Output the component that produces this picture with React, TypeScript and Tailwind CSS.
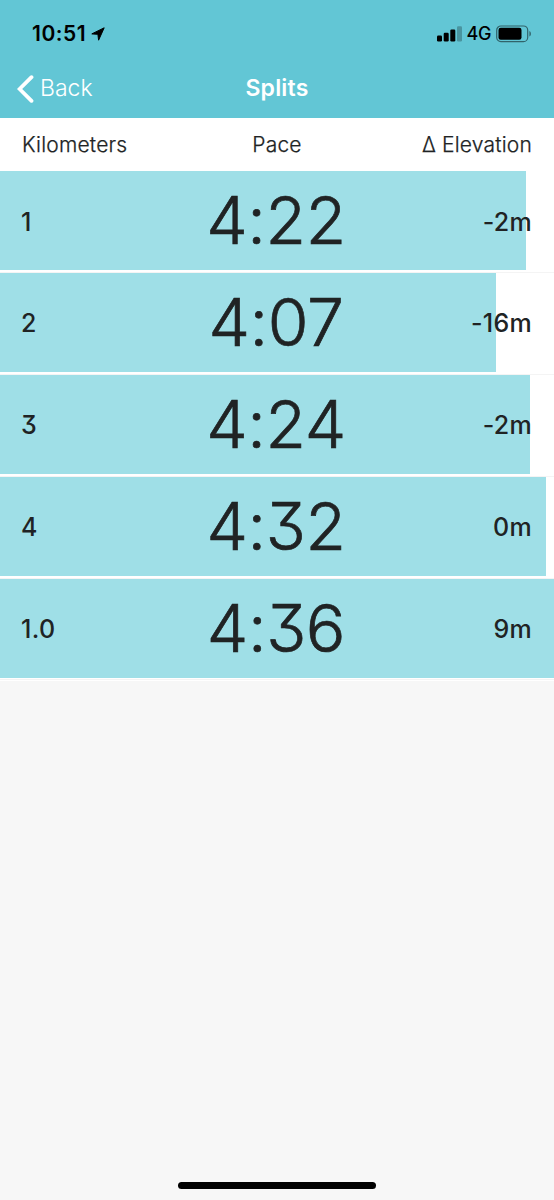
import React from 'react'

type Split = {
    label: string;
    pace: string;
    seconds: number;
    elevation: string;
}

const splits: Split[] = [
    { label: '1', pace: '4:22', seconds: 262, elevation: '-2m' },
    { label: '2', pace: '4:07', seconds: 247, elevation: '-16m' },
    { label: '3', pace: '4:24', seconds: 264, elevation: '-2m' },
    { label: '4', pace: '4:32', seconds: 272, elevation: '0m' },
    { label: '1.0', pace: '4:36', seconds: 276, elevation: '9m' },
];

const slowest = Math.max(...splits.map((s) => s.seconds));

const StatusBar = () => (
    <div className="flex h-[66px] items-center justify-between pl-8 pr-[23px] pt-px text-black">
        <div className="flex items-center gap-[5px]">
            <span className="text-[21px] font-semibold tracking-[0.5px]">10:51</span>
            <svg width="14" height="14" viewBox="0 0 14 14" fill="currentColor">
                <path stroke="currentColor" strokeWidth="1" strokeLinejoin="round" d="M13.2 0.8 7.6 13.2 6.9 7.3.8 6.9Z" />
            </svg>
        </div>
        <div className="flex items-center">
            <svg width="25" height="16" viewBox="0 0 25 16" fill="currentColor">
                <rect x="0" y="9.5" width="5" height="6" rx="1.2" />
                <rect x="6.7" y="6.8" width="5" height="8.7" rx="1.2" />
                <rect x="13.3" y="3.5" width="5" height="12" rx="1.2" />
                <rect x="20" y="0.3" width="5" height="15.2" rx="1.2" opacity="0.25" />
            </svg>
            <span className="ml-[5px] text-[18px] font-medium tracking-[-0.4px]">4G</span>
            <svg className="ml-[5px]" width="35" height="18" viewBox="0 0 35 18">
                <rect x="0.7" y="1" width="31" height="15.6" rx="4.2" fill="none" stroke="#000" strokeWidth="1.2" opacity="0.5" />
                <rect x="2.5" y="2.8" width="23" height="12" rx="2.2" />
                <path d="M33.4 6v5.6c2-.8 2-4.8 0-5.6Z" opacity="0.5" />
            </svg>
        </div>
    </div>
);

const SplitRow = ({ split }: { split: Split }) => (
    <div className="relative h-[101.8px] border-b border-[#f4f4f4] bg-white">
        <div
            className="h-[99px] bg-[#9fdfe7]"
            style={{ width: `${(split.seconds / slowest) * 100}%` }}
        />
        <div className="absolute inset-x-0 top-0 grid h-[102px] grid-cols-3 items-center px-[22px] text-[25px] font-medium">
            <span className="-ml-px tracking-[0.3px]">{split.label}</span>
            <span className="whitespace-nowrap pb-[4px] pr-[2px] text-center text-[66px] font-light leading-none tracking-[-0.4px] [-webkit-text-stroke:0.7px_#202324]">{split.pace}</span>
            <span className="text-right tracking-[0.3px]">{split.elevation}</span>
        </div>
    </div>
);

const App = () => {
    return (
        <div className="flex h-[1200px] w-[554px] flex-col overflow-hidden bg-[#f7f7f7] font-['Inter',sans-serif] text-[#202324] [font-feature-settings:'cv09','calt'_0]">
            <header className="h-[118px] shrink-0 bg-[#62c6d5]">
                <StatusBar />
                <div className="grid h-[45px] grid-cols-3 items-center px-[17px] text-white">
                    <button className="flex items-center gap-[6px] text-[23px] font-light">
                        <svg width="17" height="28" viewBox="0 0 17 28" fill="none" stroke="currentColor" strokeWidth="3.8" strokeLinecap="round" strokeLinejoin="miter">
                            <path d="M14.5 2.2 2.6 14l11.9 11.8" />
                        </svg>
                        Back
                    </button>
                    <h1 className="text-center text-[23px] font-semibold tracking-[0.2px]">Splits</h1>
                </div>
            </header>

            <div className="grid h-[53.4px] shrink-0 grid-cols-[1fr_auto_1fr] items-center bg-white px-[22px] text-[21px] font-light tracking-[0.2px] [-webkit-text-stroke:0.25px_#202324]">
                <span>Kilometers</span>
                <span className="text-center">Pace</span>
                <span className="text-right">Δ Elevation</span>
            </div>

            <main className="shrink-0 bg-white pb-px">
                {splits.map((split) => (
                    <SplitRow key={split.label} split={split} />
                ))}
            </main>

            <div className="mx-auto mb-[11px] mt-auto h-[7px] w-[198px] rounded-full bg-black" />
        </div>
    );
}

export default App
